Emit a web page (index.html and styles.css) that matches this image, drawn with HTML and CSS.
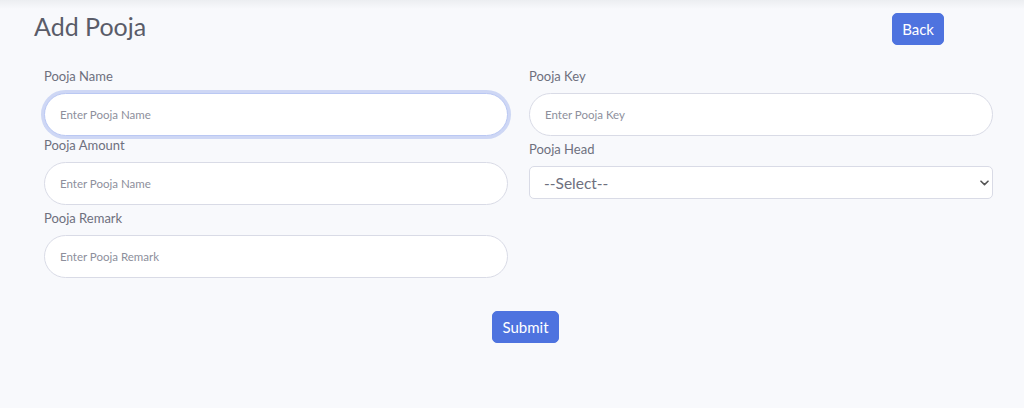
FILE: index.html
```html
<!DOCTYPE html>
<html lang="en">
<head>
<meta charset="utf-8">
<title>Add Pooja</title>
<link rel="stylesheet" href="styles.css">
</head>
<body>
<div class="page">
  <header class="page-header">
    <h3 class="page-title">Add Pooja</h3>
    <button class="btn btn-primary" type="button">Back</button>
  </header>
  <form class="pooja-form">
    <div class="form-grid">
      <div class="form-col">
        <div class="field field-tight">
          <label class="field-label">Pooja Name</label>
          <input class="field-input is-focused" type="text" placeholder="Enter Pooja Name">
        </div>
        <div class="field">
          <label class="field-label">Pooja Amount</label>
          <input class="field-input" type="text" placeholder="Enter Pooja Name">
        </div>
        <div class="field">
          <label class="field-label">Pooja Remark</label>
          <input class="field-input" type="text" placeholder="Enter Pooja Remark">
        </div>
      </div>
      <div class="form-col">
        <div class="field">
          <label class="field-label">Pooja Key</label>
          <input class="field-input" type="text" placeholder="Enter Pooja Key">
        </div>
        <div class="field">
          <label class="field-label">Pooja Head</label>
          <div class="select-wrap">
            <select class="field-select">
              <option>--Select--</option>
            </select>
            <svg class="select-chevron" width="9" height="6" viewBox="0 0 9 6" aria-hidden="true">
              <path d="M1 1.2 L4.5 4.6 L8 1.2" fill="none" stroke="#555" stroke-width="1.6" stroke-linecap="round" stroke-linejoin="round"/>
            </svg>
          </div>
        </div>
      </div>
    </div>
    <div class="form-actions">
      <button class="btn btn-primary" type="button">Submit</button>
    </div>
  </form>
</div>
</body>
</html>
```

FILE: styles.css
```css
* {
  box-sizing: border-box;
}

html, body {
  height: 100%;
}

body {
  margin: 0;
  font-family: "Lato", "Open Sans", "Liberation Sans", sans-serif;
  background: linear-gradient(#eceef1 0, #f8f9fc 9px) #f8f9fc;
  background-repeat: no-repeat;
  background-color: #f8f9fc;
  color: #6e707e;
}

.page {
  padding: 11px 80px 0 34px;
}

.page-header {
  display: flex;
  justify-content: space-between;
  align-items: flex-start;
}

.page-title {
  margin: 0;
  font-size: 25px;
  line-height: 30px;
  font-weight: 400;
  color: #5a5c69;
}

.page-header .btn {
  margin-top: 2px;
}

.btn {
  height: 32px;
  padding: 0 9px;
  border: 1px solid transparent;
  border-radius: 5px;
  font-family: inherit;
  font-size: 15px;
  line-height: 30px;
  cursor: pointer;
}

.btn-primary {
  background: #4e73df;
  border-color: #4e73df;
  color: #fff;
}

.pooja-form {
  margin: 22px -49px 0 10px;
}

.form-grid {
  display: grid;
  grid-template-columns: 1fr 1fr;
  column-gap: 21px;
}

.form-col {
  display: flex;
  flex-direction: column;
  gap: 4px;
}

.field-tight {
  margin-bottom: -4px;
}

.field-label {
  display: block;
  font-size: 13px;
  line-height: 19px;
  margin-bottom: 7px;
  color: #6e707e;
}

.field-input {
  display: block;
  width: 100%;
  height: 43px;
  padding: 0 15px;
  border: 1px solid #d9dbe6;
  border-radius: 10rem;
  background: #fff;
  font-family: inherit;
  font-size: 11.5px;
  color: #6e707e;
  outline: none;
}

.field-input::placeholder {
  color: #8d8f9c;
}

.field-input.is-focused {
  border-color: #bac8f3;
  box-shadow: 0 0 0 3px rgba(78, 115, 223, 0.25);
}

.select-wrap {
  position: relative;
}

.field-select {
  display: block;
  width: 100%;
  height: 33px;
  padding: 0 12px 0 14px;
  border: 1px solid #d9dbe6;
  border-radius: 5px;
  background: #fff;
  font-family: inherit;
  font-size: 15.5px;
  color: #6e707e;
  appearance: none;
  -webkit-appearance: none;
  outline: none;
}

.select-chevron {
  position: absolute;
  right: 4px;
  top: 14px;
}

.form-actions {
  display: flex;
  justify-content: center;
  margin-top: 33px;
  padding-left: 14px;
}
```
